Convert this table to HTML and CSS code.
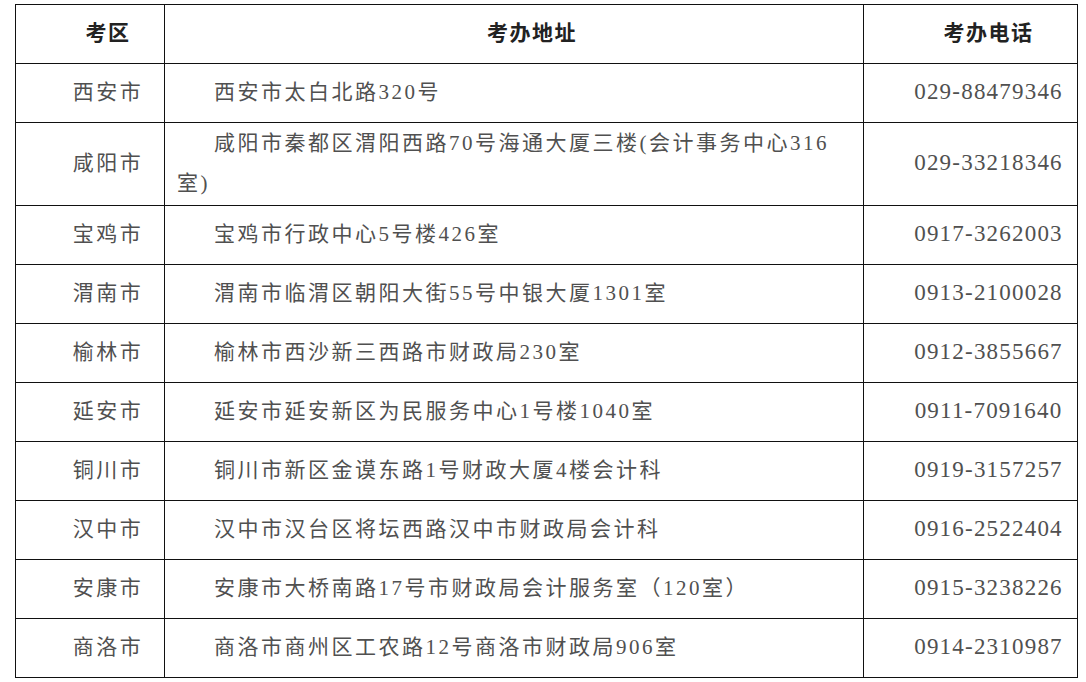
FILE: index.html
```html
<!DOCTYPE html>
<html lang="zh-CN">
<head>
<meta charset="utf-8">
<title>考办地址</title>
<link rel="stylesheet" href="styles.css">
</head>
<body>
<table class="exam-table">
  <colgroup>
    <col class="col-area">
    <col class="col-addr">
    <col class="col-tel">
  </colgroup>
  <thead>
    <tr>
      <th class="c-area">考区</th>
      <th class="c-addr-h">考办地址</th>
      <th class="c-tel">考办电话</th>
    </tr>
  </thead>
  <tbody>
    <tr><td class="c-area">西安市</td><td class="c-addr">西安市太白北路320号</td><td class="c-tel">029-88479346</td></tr>
    <tr><td class="c-area">咸阳市</td><td class="c-addr">咸阳市秦都区渭阳西路70号海通大厦三楼(会计事务中心316室)</td><td class="c-tel">029-33218346</td></tr>
    <tr><td class="c-area">宝鸡市</td><td class="c-addr">宝鸡市行政中心5号楼426室</td><td class="c-tel">0917-3262003</td></tr>
    <tr><td class="c-area">渭南市</td><td class="c-addr">渭南市临渭区朝阳大街55号中银大厦1301室</td><td class="c-tel">0913-2100028</td></tr>
    <tr><td class="c-area">榆林市</td><td class="c-addr">榆林市西沙新三西路市财政局230室</td><td class="c-tel">0912-3855667</td></tr>
    <tr><td class="c-area">延安市</td><td class="c-addr">延安市延安新区为民服务中心1号楼1040室</td><td class="c-tel">0911-7091640</td></tr>
    <tr><td class="c-area">铜川市</td><td class="c-addr">铜川市新区金谟东路1号财政大厦4楼会计科</td><td class="c-tel">0919-3157257</td></tr>
    <tr><td class="c-area">汉中市</td><td class="c-addr">汉中市汉台区将坛西路汉中市财政局会计科</td><td class="c-tel">0916-2522404</td></tr>
    <tr><td class="c-area">安康市</td><td class="c-addr">安康市大桥南路17号市财政局会计服务室（120室）</td><td class="c-tel">0915-3238226</td></tr>
    <tr><td class="c-area">商洛市</td><td class="c-addr">商洛市商州区工农路12号商洛市财政局906室</td><td class="c-tel">0914-2310987</td></tr>
  </tbody>
</table>
</body>
</html>
```

FILE: styles.css
```css
html, body {
  margin: 0;
  padding: 0;
  background: #ffffff;
}

body {
  padding: 4px 0 0 15px;
  font-family: "Liberation Serif", Tinos, "Noto Sans CJK SC", serif;
  font-size: 21px;
  color: #505050;
}

.exam-table {
  border-collapse: collapse;
  table-layout: fixed;
  width: 1062px;
}

.col-area { width: 149px; }
.col-addr { width: 699px; }
.col-tel  { width: 214px; }

.exam-table th,
.exam-table td {
  border: 1px solid #111;
  height: 56px;
  padding: 0 0 2px;
  line-height: 40px;
  letter-spacing: 2.5px;
  vertical-align: middle;
  font-weight: 400;
}

.exam-table th {
  color: #222;
  font-weight: 700;
  letter-spacing: 1.5px;
}

.exam-table .c-area,
.exam-table .c-tel,
.exam-table .c-addr-h {
  text-align: center;
  padding-left: 36px;
}

.exam-table td.c-tel {
  font-size: 23px;
  letter-spacing: 1.2px;
}

.exam-table th.c-tel {
  letter-spacing: 1.5px;
}

.exam-table .c-addr {
  text-align: left;
  padding-left: 12px;
  padding-right: 4px;
  text-indent: 37px;
}
```
